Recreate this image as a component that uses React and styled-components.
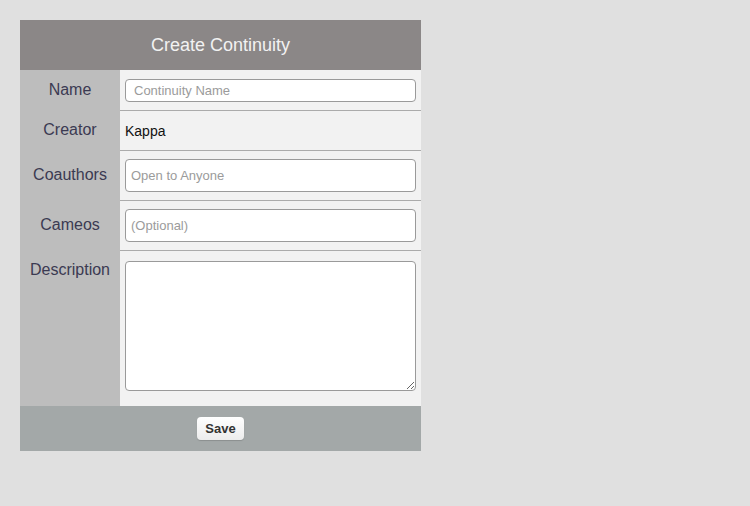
import React from 'react';
import styled, { createGlobalStyle } from 'styled-components';

const GlobalStyle = createGlobalStyle`
  html, body {
    margin: 0;
    padding: 0;
    background: #e0e0e0;
    font-family: "Liberation Sans", Arial, sans-serif;
  }
`;

const Page = styled.div`
  padding: 20px;
`;

const Panel = styled.section`
  width: 401px;
  display: flex;
  flex-direction: column;
`;

const Header = styled.h1`
  margin: 0;
  height: 50px;
  background: #8b8787;
  color: #f2f2f2;
  font-size: 18px;
  font-weight: normal;
  display: flex;
  align-items: center;
  justify-content: center;
`;

const Row = styled.div`
  display: flex;
`;

const Label = styled.div`
  width: 100px;
  flex-shrink: 0;
  background: #bdbdbd;
  color: #3b3a52;
  font-size: 16px;
  display: flex;
  justify-content: center;
  align-items: ${p => (p.$top ? 'flex-start' : 'center')};
  padding: ${p => (p.$top ? '10px 0 0' : '0 0 2px')};
  box-sizing: border-box;
`;

const Cell = styled.div`
  flex: 1;
  background: #f2f2f2;
  padding: ${p => p.$pad || '8px 5px'};
  border-bottom: ${p => (p.$last ? 'none' : '1px solid #ababab')};
  display: flex;
  align-items: center;
`;

const Input = styled.input`
  width: 100%;
  box-sizing: border-box;
  height: ${p => p.$h || 33}px;
  border: 1px solid #9a9a9a;
  border-radius: 4px;
  background: #fff;
  padding: 0 5px;
  font-family: "Liberation Sans", Arial, sans-serif;
  font-size: 13px;
  color: #222;
  outline: none;
  &::placeholder {
    color: #9b9b9b;
  }
`;

const Text = styled.span`
  font-size: 14px;
  color: #111;
  line-height: 19px;
`;

const TextArea = styled.textarea`
  width: 100%;
  box-sizing: border-box;
  height: 130px;
  border: 1px solid #9a9a9a;
  border-radius: 4px;
  background: #fff;
  font-family: "Liberation Sans", Arial, sans-serif;
  font-size: 13px;
  display: block;
  margin: 0;
  outline: none;
`;

const Footer = styled.div`
  height: 45px;
  background: #a3a8a8;
  display: flex;
  justify-content: center;
  align-items: flex-start;
  padding-top: 11px;
  box-sizing: border-box;
`;

const Button = styled.button`
  width: 47px;
  height: 23px;
  border: none;
  border-radius: 4px;
  background: linear-gradient(#ffffff, #ececec);
  box-shadow: 0 1px 1px rgba(0, 0, 0, 0.15);
  font-family: "Liberation Sans", Arial, sans-serif;
  font-weight: bold;
  font-size: 13px;
  color: #333;
  padding: 0;
  cursor: pointer;
`;

export default function App() {
  return (
    <>
      <GlobalStyle />
      <Page>
        <Panel>
          <Header>Create Continuity</Header>
          <Row>
            <Label>Name</Label>
            <Cell $pad="9px 5px 8px">
              <Input $h={23} placeholder="Continuity Name" style={{ paddingLeft: 8 }} />
            </Cell>
          </Row>
          <Row>
            <Label>Creator</Label>
            <Cell $pad="11px 5px 9px">
              <Text>Kappa</Text>
            </Cell>
          </Row>
          <Row>
            <Label>Coauthors</Label>
            <Cell>
              <Input placeholder="Open to Anyone" />
            </Cell>
          </Row>
          <Row>
            <Label>Cameos</Label>
            <Cell>
              <Input placeholder="(Optional)" />
            </Cell>
          </Row>
          <Row>
            <Label $top>Description</Label>
            <Cell $pad="10px 5px 15px" $last>
              <TextArea />
            </Cell>
          </Row>
          <Footer>
            <Button>Save</Button>
          </Footer>
        </Panel>
      </Page>
    </>
  );
}
